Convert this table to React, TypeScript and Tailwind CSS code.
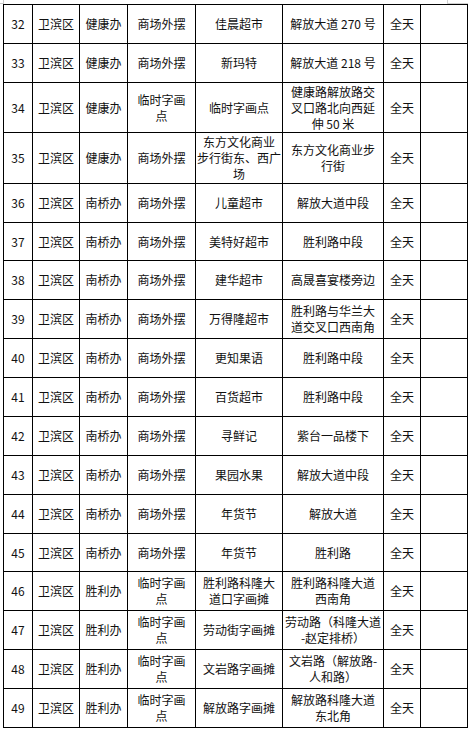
const widths = ['w-[29px]', 'w-[47px]', 'w-[48px]', 'w-[68px]', 'w-[87px]', 'w-[101px]', 'w-[37px]', 'w-[47px]']

type Row = { no: string; office: string; kind: string; name: string; place: string; h: string }

const rows: Row[] = [
  { no: '32', office: '健康办', kind: '商场外摆', name: '佳晨超市', place: '解放大道 270 号', h: 'h-[39px]' },
  { no: '33', office: '健康办', kind: '商场外摆', name: '新玛特', place: '解放大道 218 号', h: 'h-[39px]' },
  { no: '34', office: '健康办', kind: '临时字画|点', name: '临时字画点', place: '健康路解放路交|叉口路北向西延|伸 50 米', h: 'h-[50px]' },
  { no: '35', office: '健康办', kind: '商场外摆', name: '东方文化商业|步行街东、西广|场', place: '东方文化商业步|行街', h: 'h-[51px]' },
  { no: '36', office: '南桥办', kind: '商场外摆', name: '儿童超市', place: '解放大道中段', h: 'h-[39px]' },
  { no: '37', office: '南桥办', kind: '商场外摆', name: '美特好超市', place: '胜利路中段', h: 'h-[38px]' },
  { no: '38', office: '南桥办', kind: '商场外摆', name: '建华超市', place: '高晟喜宴楼旁边', h: 'h-[39px]' },
  { no: '39', office: '南桥办', kind: '商场外摆', name: '万得隆超市', place: '胜利路与华兰大|道交叉口西南角', h: 'h-[39px]' },
  { no: '40', office: '南桥办', kind: '商场外摆', name: '更知果语', place: '胜利路中段', h: 'h-[39px]' },
  { no: '41', office: '南桥办', kind: '商场外摆', name: '百货超市', place: '胜利路中段', h: 'h-[39px]' },
  { no: '42', office: '南桥办', kind: '商场外摆', name: '寻鲜记', place: '紫台一品楼下', h: 'h-[39px]' },
  { no: '43', office: '南桥办', kind: '商场外摆', name: '果园水果', place: '解放大道中段', h: 'h-[39px]' },
  { no: '44', office: '南桥办', kind: '商场外摆', name: '年货节', place: '解放大道', h: 'h-[39px]' },
  { no: '45', office: '南桥办', kind: '商场外摆', name: '年货节', place: '胜利路', h: 'h-[38px]' },
  { no: '46', office: '胜利办', kind: '临时字画|点', name: '胜利路科隆大|道口字画摊', place: '胜利路科隆大道|西南角', h: 'h-[39px]' },
  { no: '47', office: '胜利办', kind: '临时字画|点', name: '劳动街字画摊', place: '劳动路（科隆大道|-赵定排桥）', h: 'h-[39px]' },
  { no: '48', office: '胜利办', kind: '临时字画|点', name: '文岩路字画摊', place: '文岩路（解放路-|人和路）', h: 'h-[39px]' },
  { no: '49', office: '胜利办', kind: '临时字画|点', name: '解放路字画摊', place: '解放路科隆大道|东北角', h: 'h-[39px]' },
]

function Lines({ text }: { text: string }) {
  const parts = text.split('|')
  return (
    <>
      {parts.map((p, i) => (
        <div key={i} className="whitespace-nowrap">
          {p}
        </div>
      ))}
    </>
  )
}

export default function App() {
  const cell = 'border border-black text-center align-middle p-0 overflow-visible'
  return (
    <div
      className="relative w-[473px] h-[732px] bg-white text-[#111] text-[12px] leading-[16px] overflow-hidden"
      style={{ fontFamily: '"Noto Sans CJK SC", "Liberation Sans", sans-serif' }}
    >
      {/* page corner marks */}
      <div className="absolute left-0 top-0 w-[4px] h-[4px] border-r border-b border-[#c8c8c8]" />
      <div className="absolute left-[447px] top-0 w-[21px] h-[4px] border-l border-b border-[#d0d0d0]" />

      <table className="ml-[3px] mt-[4px] border-collapse table-fixed w-[464px]">
        <colgroup>
          {widths.map((w, i) => (
            <col key={i} className={w} />
          ))}
        </colgroup>
        <tbody>
          {rows.map((r) => (
            <tr key={r.no} className={r.h}>
              <td className={cell}>{r.no}</td>
              <td className={cell}>卫滨区</td>
              <td className={cell}>{r.office}</td>
              <td className={cell}>
                <Lines text={r.kind} />
              </td>
              <td className={cell}>
                <Lines text={r.name} />
              </td>
              <td className={cell}>
                <Lines text={r.place} />
              </td>
              <td className={cell}>全天</td>
              <td className={cell}></td>
            </tr>
          ))}
        </tbody>
      </table>
    </div>
  )
}
